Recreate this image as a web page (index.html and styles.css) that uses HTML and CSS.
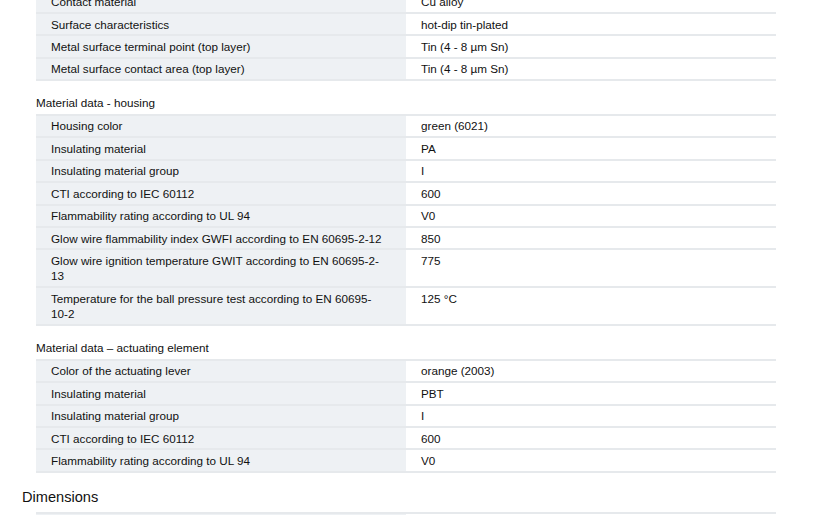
FILE: index.html
```html
<!DOCTYPE html>
<html lang="en">
<head>
<meta charset="utf-8">
<title>Material data</title>
<link rel="stylesheet" href="styles.css">
</head>
<body>
<main class="page">
  <section class="group first">
    <div class="table">
      <div class="row"><div class="label">Contact material</div><div class="value">Cu alloy</div></div>
      <div class="row"><div class="label">Surface characteristics</div><div class="value">hot-dip tin-plated</div></div>
      <div class="row"><div class="label">Metal surface terminal point (top layer)</div><div class="value">Tin (4 - 8 µm Sn)</div></div>
      <div class="row"><div class="label">Metal surface contact area (top layer)</div><div class="value">Tin (4 - 8 µm Sn)</div></div>
    </div>
  </section>

  <section class="group">
    <h3 class="group-title">Material data - housing</h3>
    <div class="table">
      <div class="row"><div class="label">Housing color</div><div class="value">green (6021)</div></div>
      <div class="row"><div class="label">Insulating material</div><div class="value">PA</div></div>
      <div class="row"><div class="label">Insulating material group</div><div class="value">I</div></div>
      <div class="row"><div class="label">CTI according to IEC 60112</div><div class="value">600</div></div>
      <div class="row"><div class="label">Flammability rating according to UL 94</div><div class="value">V0</div></div>
      <div class="row"><div class="label">Glow wire flammability index GWFI according to EN 60695-2-12</div><div class="value">850</div></div>
      <div class="row"><div class="label">Glow wire ignition temperature GWIT according to EN 60695-2-13</div><div class="value">775</div></div>
      <div class="row"><div class="label">Temperature for the ball pressure test according to EN 60695-10-2</div><div class="value">125 °C</div></div>
    </div>
  </section>

  <section class="group">
    <h3 class="group-title">Material data – actuating element</h3>
    <div class="table">
      <div class="row"><div class="label">Color of the actuating lever</div><div class="value">orange (2003)</div></div>
      <div class="row"><div class="label">Insulating material</div><div class="value">PBT</div></div>
      <div class="row"><div class="label">Insulating material group</div><div class="value">I</div></div>
      <div class="row"><div class="label">CTI according to IEC 60112</div><div class="value">600</div></div>
      <div class="row"><div class="label">Flammability rating according to UL 94</div><div class="value">V0</div></div>
    </div>
  </section>

  <h2 class="section-title">Dimensions</h2>
  <section class="group flush">
    <div class="table">
      <div class="row"><div class="label">Width</div><div class="value">10 mm</div></div>
      <div class="row"><div class="label">Height</div><div class="value">15.7 mm</div></div>
    </div>
  </section>
</main>
</body>
</html>
```

FILE: styles.css
```css
* {
  box-sizing: border-box;
}

html, body {
  margin: 0;
  padding: 0;
  background: #ffffff;
}

body {
  font-family: "Liberation Sans", Arial, Helvetica, sans-serif;
  font-size: 11.7px;
  color: #111111;
}

.page {
  padding-left: 22px;
  margin-top: -10.4px;
}

.group {
  margin-left: 14px;
  width: 740px;
}

.group-title {
  margin: 14.25px 0 3.5px 0;
  font-size: 11.7px;
  line-height: 15px;
  font-weight: normal;
}

.table {
  border-top: 2px solid #e6e9ec;
}

.row {
  display: grid;
  grid-template-columns: 370px 370px;
  border-bottom: 2px solid #e6e9ec;
}

.label,
.value {
  padding: 2.5px 21px 2.5px 15px;
  line-height: 15.4px;
}

.label {
  background: #eef1f4;
}

.value {
  background: #ffffff;
}

.section-title {
  margin: 15px 0 6px 0;
  font-size: 14.6px;
  line-height: 18px;
  font-weight: normal;
}
```
